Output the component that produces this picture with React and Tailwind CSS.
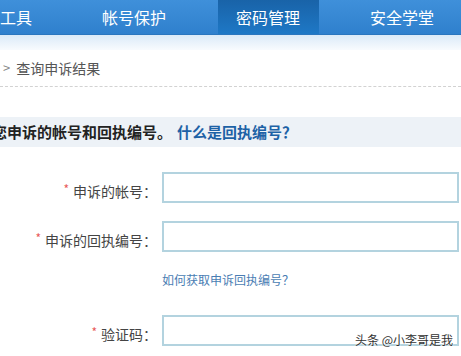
import React from "react";

const font = { fontFamily: '"Noto Sans CJK SC", "Noto Sans", sans-serif' };

function Row({ label, top }) {
  return (
    <div className={`flex items-center ${top}`}>
      <div className="w-[157px] flex justify-end items-center text-[14px] text-[#444] leading-none pt-[6px]">
        <span className="text-[#e85a5a] text-[12px] mr-[4px] -mt-[4px]">*</span>
        <span>{label}</span>
      </div>
      <div className="ml-[5px] w-[297px] h-[31px] border-2 border-[#b3d3df] bg-white" />
    </div>
  );
}

export default function App() {
  return (
    <div className="relative w-[461px] h-[356px] overflow-hidden bg-white" style={font}>
      {/* nav */}
      <div className="flex h-[35px] bg-gradient-to-b from-[#3f90da] to-[#2f80cd] border-b border-[#2a76bf] text-white text-[16px]">
        <div className="w-[67px] shrink-0 flex items-center justify-end pr-[35px] leading-none">工具</div>
        <div className="w-[134px] shrink-0 flex items-center justify-center leading-none">帐号保护</div>
        <div className="w-[134px] shrink-0 flex items-center justify-center">
          <div className="w-[101px] h-full flex items-center justify-center bg-gradient-to-b from-[#1963a8] to-[#1e78c6] leading-none">密码管理</div>
        </div>
        <div className="w-[134px] shrink-0 flex items-center justify-center leading-none">安全学堂</div>
      </div>
      <div className="h-[15px] bg-gradient-to-b from-[#dbeaf8] to-[#f8fbfe]" />
      {/* breadcrumb */}
      <div className="h-[37px] flex items-center pl-[3px] text-[14px] text-[#555] border-b border-dashed border-[#d2d2d2]">
        <span className="text-[#888] text-[13px] mr-[6px]">&gt;</span>
        <span>查询申诉结果</span>
      </div>
      {/* header strip */}
      <div className="mt-[30px] h-[30px] bg-[#edf2f7] flex items-center text-[15px] font-bold whitespace-nowrap">
        <span className="-ml-[8px] text-[#222]">您申诉的帐号和回执编号。</span>
        <span className="ml-[5px] text-[#1d62a6]">什么是回执编号？</span>
      </div>
      {/* form */}
      <Row label="申诉的帐号：" top="mt-[25px]" />
      <Row label="申诉的回执编号：" top="mt-[18px]" />
      <div className="ml-[162px] mt-[22px] text-[12px] text-[#4a7db3] leading-none">如何获取申诉回执编号？</div>
      <Row label="验证码：" top="mt-[29px]" />
      {/* watermark */}
      <div className="absolute left-[355px] top-[334px] text-[12px] text-[#333] leading-none whitespace-nowrap" style={{ textShadow: "0 0 2px #fff, 0 0 2px #fff" }}>
        头条 @小李哥是我
      </div>
    </div>
  );
}
